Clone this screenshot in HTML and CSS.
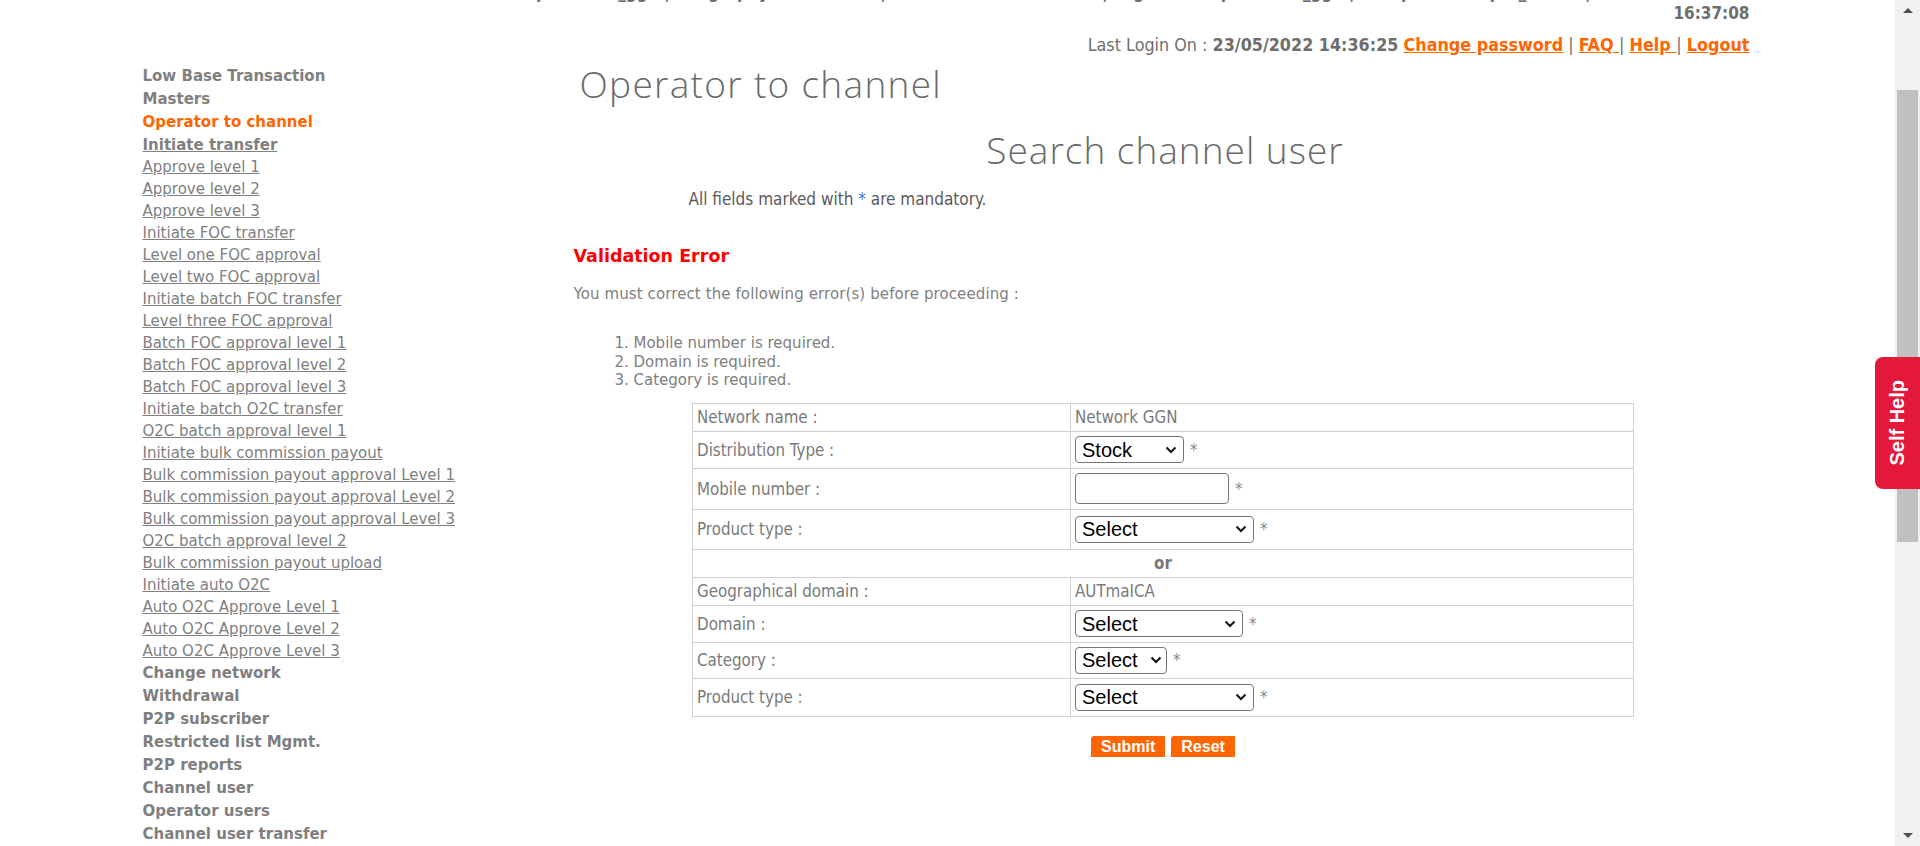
FILE: index.html
```html
<!DOCTYPE html>
<html lang="en">
<head>
<meta charset="utf-8">
<title>Operator to channel</title>
<link rel="stylesheet" href="styles.css">
</head>
<body>
<div class="viewport">
  <div class="page">
    <header class="top">
      <div class="welcome">Welcome : superadmin_ggn | Geography : AUTmaICA | Network : Network GGN | Login ID : superadmin_ggn | Group role : Super_admin | Date : 23/05/2022</div>
      <div class="time">16:37:08</div>
      <div class="lastlogin">Last Login On : <b>23/05/2022 14:36:25</b> <a class="hl" href="#">Change password</a> | <a class="hl" href="#">FAQ </a>| <a class="hl" href="#">Help </a>| <a class="hl" href="#">Logout</a></div>
    </header>

    <div class="body">
      <nav class="side">
        <div class="sec">Low Base Transaction</div>
        <div class="sec">Masters</div>
        <div class="sec active">Operator to channel</div>
        <a class="lnk cur" href="#">Initiate transfer</a>
        <a class="lnk" href="#">Approve level 1</a>
        <a class="lnk" href="#">Approve level 2</a>
        <a class="lnk" href="#">Approve level 3</a>
        <a class="lnk" href="#">Initiate FOC transfer</a>
        <a class="lnk" href="#">Level one FOC approval</a>
        <a class="lnk" href="#">Level two FOC approval</a>
        <a class="lnk" href="#">Initiate batch FOC transfer</a>
        <a class="lnk" href="#">Level three FOC approval</a>
        <a class="lnk" href="#">Batch FOC approval level 1</a>
        <a class="lnk" href="#">Batch FOC approval level 2</a>
        <a class="lnk" href="#">Batch FOC approval level 3</a>
        <a class="lnk" href="#">Initiate batch O2C transfer</a>
        <a class="lnk" href="#">O2C batch approval level 1</a>
        <a class="lnk" href="#">Initiate bulk commission payout</a>
        <a class="lnk" href="#">Bulk commission payout approval Level 1</a>
        <a class="lnk" href="#">Bulk commission payout approval Level 2</a>
        <a class="lnk" href="#">Bulk commission payout approval Level 3</a>
        <a class="lnk" href="#">O2C batch approval level 2</a>
        <a class="lnk" href="#">Bulk commission payout upload</a>
        <a class="lnk" href="#">Initiate auto O2C</a>
        <a class="lnk" href="#">Auto O2C Approve Level 1</a>
        <a class="lnk" href="#">Auto O2C Approve Level 2</a>
        <a class="lnk" href="#">Auto O2C Approve Level 3</a>
        <div class="sec">Change network</div>
        <div class="sec">Withdrawal</div>
        <div class="sec">P2P subscriber</div>
        <div class="sec">Restricted list Mgmt.</div>
        <div class="sec">P2P reports</div>
        <div class="sec">Channel user</div>
        <div class="sec">Operator users</div>
        <div class="sec">Channel user transfer</div>
      </nav>

      <main class="main">
        <h1 class="title">Operator to channel</h1>
        <h2 class="subtitle">Search channel user</h2>
        <p class="mandatory">All fields marked with <span class="star">*</span> are mandatory.</p>

        <h3 class="verr">Validation Error</h3>
        <p class="vmsg">You must correct the following error(s) before proceeding :</p>
        <ol class="errs">
          <li>Mobile number is required.</li>
          <li>Domain is required.</li>
          <li>Category is required.</li>
        </ol>

        <table class="form">
          <tr class="h28"><td class="lbl">Network name :</td><td class="val">Network GGN</td></tr>
          <tr class="h37"><td class="lbl">Distribution Type :</td><td class="val"><select class="sel w109"><option>Stock</option></select><span class="req">*</span></td></tr>
          <tr class="h41"><td class="lbl">Mobile number :</td><td class="val"><input class="inp" type="text"><span class="req">*</span></td></tr>
          <tr class="h40"><td class="lbl">Product type :</td><td class="val"><select class="sel w179"><option>Select</option></select><span class="req">*</span></td></tr>
          <tr class="h28"><td class="or" colspan="2">or</td></tr>
          <tr class="h28"><td class="lbl">Geographical domain :</td><td class="val">AUTmaICA</td></tr>
          <tr class="h37"><td class="lbl">Domain :</td><td class="val"><select class="sel w168"><option>Select</option></select><span class="req">*</span></td></tr>
          <tr class="h36"><td class="lbl">Category :</td><td class="val"><select class="sel w92"><option>Select</option></select><span class="req">*</span></td></tr>
          <tr class="h38"><td class="lbl">Product type :</td><td class="val"><select class="sel w179"><option>Select</option></select><span class="req">*</span></td></tr>
        </table>

        <div class="actions">
          <button class="btn" type="button">Submit</button>
          <button class="btn" type="button">Reset</button>
        </div>
      </main>
    </div>
  </div>
</div>

<div class="scrollbar">
  <div class="sb-up"></div>
  <div class="sb-thumb"></div>
  <div class="sb-down"></div>
</div>
<div class="selfhelp"><span>Self Help</span></div>
</body>
</html>
```

FILE: styles.css
```css
html, body {
  margin: 0;
  padding: 0;
  overflow: hidden;
  background: #ffffff;
}
body {
  font-family: "DejaVu Sans", Verdana, sans-serif;
  color: #808080;
  height: 846px;
}
.viewport {
  width: calc(100% - 25px);
}
.page {
  width: 1610px;
  margin: 0 auto;
}

/* header */
.top {
  text-align: right;
  padding-right: 3px;
  font-family: "DejaVu Sans Condensed", "DejaVu Sans", sans-serif;
  font-stretch: condensed;
  color: #6e6e6e;
}
.welcome {
  font-size: 17px;
  font-weight: bold;
  line-height: 20px;
  margin-top: -18px;
  white-space: nowrap;
}
.time {
  font-size: 17px;
  font-weight: bold;
  line-height: 18px;
  margin-top: 2px;
}
.lastlogin {
  font-size: 17.8px;
  line-height: 20px;
  margin-top: 13px;
}
.lastlogin b { color: #6e6e6e; }
.hl {
  color: #ff6600;
  font-weight: bold;
  text-decoration: underline;
}

/* body */
.body {
  display: flex;
  margin-top: 10px;
}
.side {
  width: 431px;
  flex: none;
  display: flex;
  flex-direction: column;
  align-items: flex-start;
  font-size: 15px;
}
.sec {
  font-weight: bold;
  line-height: 23px;
  color: #7f7f7f;
}
.sec.active { color: #ff6600; }
.lnk {
  line-height: 22px;
  color: #808080;
  text-decoration: underline;
}
.lnk.cur { font-weight: bold; }

.main {
  flex: 1;
  display: flex;
  flex-direction: column;
  margin-top: -1px;
}
.title {
  margin: 0;
  padding-left: 6px;
  font-family: "Open Sans", "Lato", sans-serif;
  font-weight: 300;
  font-size: 37px;
  letter-spacing: 1.3px;
  line-height: 40px;
  color: #6a6a6a;
}
.subtitle {
  margin: 26px 0 0;
  padding-left: 4px;
  text-align: center;
  font-family: "Open Sans", "Lato", sans-serif;
  font-weight: 300;
  font-size: 37px;
  letter-spacing: 1px;
  line-height: 40px;
  color: #6a6a6a;
}
.mandatory {
  margin: 19px 0 0 115px;
  font-family: "DejaVu Sans Condensed", "DejaVu Sans", sans-serif;
  font-stretch: condensed;
  font-size: 17px;
  line-height: 20px;
  color: #5a5a5a;
}
.star { color: #4a78c8; }
.verr {
  margin: 36px 0 0;
  font-size: 17.5px;
  line-height: 22px;
  font-weight: bold;
  color: #ff0000;
}
.vmsg {
  margin: 17px 0 0;
  font-size: 15px;
  letter-spacing: 0.1px;
  line-height: 20px;
  color: #808080;
}
.errs {
  margin: 30px 0 0;
  padding-left: 60px;
  font-size: 15px;
  line-height: 18.5px;
  color: #808080;
}

.form {
  margin: 13px auto 0;
  width: 942px;
  border-collapse: collapse;
  font-family: "DejaVu Sans Condensed", "DejaVu Sans", sans-serif;
  font-stretch: condensed;
  font-size: 16.8px;
  color: #7a7a7a;
}
.form td {
  border: 1px solid #d0d0d0;
  padding: 0 4px;
  vertical-align: middle;
}
.form td.lbl { width: 369px; }
.form td.or {
  text-align: center;
  font-weight: bold;
  color: #777777;
}
.h28 { height: 28px; }
.h36 { height: 36px; }
.h37 { height: 37px; }
.h38 { height: 38px; }
.h40 { height: 40px; }
.h41 { height: 41px; }

.sel {
  -webkit-appearance: none;
  appearance: none;
  box-sizing: border-box;
  font-family: "Liberation Sans", Arial, sans-serif;
  font-size: 20px;
  height: 27px;
  color: #000;
  background-color: #fff;
  background-image: url("data:image/svg+xml;utf8,<svg xmlns='http://www.w3.org/2000/svg' width='12' height='8' viewBox='0 0 12 8'><path d='M1.5 1.5 L6 6 L10.5 1.5' fill='none' stroke='%23111' stroke-width='2'/></svg>");
  background-repeat: no-repeat;
  background-position: right 6px center;
  border: 1px solid #767676;
  border-radius: 4px;
  vertical-align: middle;
  padding: 0 22px 0 6px;
}
.w109 { width: 109px; }
.w179 { width: 179px; }
.w168 { width: 168px; }
.w92 { width: 92px; padding-right: 18px; background-position: right 4px center; }
.inp {
  width: 154px;
  height: 31px;
  box-sizing: border-box;
  border: 1px solid #767676;
  border-radius: 4px;
  vertical-align: middle;
  font-size: 18px;
}
.req {
  margin-left: 6px;
  color: #888;
  vertical-align: middle;
}

.actions {
  margin-top: 19px;
  display: flex;
  justify-content: center;
  gap: 6px;
}
.btn {
  height: 21px;
  padding: 0 10px;
  border: none;
  border-radius: 3px 0 0 0;
  background: #ff6600;
  color: #fff;
  font-family: "Liberation Sans", Arial, sans-serif;
  font-weight: bold;
  font-size: 16px;
  line-height: 21px;
}

/* fake browser scrollbar */
.scrollbar {
  position: fixed;
  top: 0;
  right: 0;
  width: 25px;
  height: 846px;
  background: #f1f1f1;
}
.sb-thumb {
  position: absolute;
  left: 2px;
  right: 2px;
  top: 90px;
  height: 452px;
  background: #c1c1c1;
}
.sb-up, .sb-down {
  position: absolute;
  left: 8px;
  width: 0;
  height: 0;
  border-left: 5px solid transparent;
  border-right: 5px solid transparent;
}
.sb-up {
  top: 8px;
  border-bottom: 5px solid #505050;
}
.sb-down {
  bottom: 8px;
  border-top: 5px solid #505050;
}

.selfhelp {
  position: fixed;
  right: 0;
  top: 357px;
  width: 45px;
  height: 132px;
  background: #e3183b;
  border-radius: 8px 0 0 8px;
  display: flex;
  align-items: center;
  justify-content: center;
}
.selfhelp span {
  writing-mode: vertical-rl;
  transform: rotate(180deg);
  color: #fff;
  font-family: "Liberation Sans", Arial, sans-serif;
  font-weight: bold;
  font-size: 20px;
}
```
